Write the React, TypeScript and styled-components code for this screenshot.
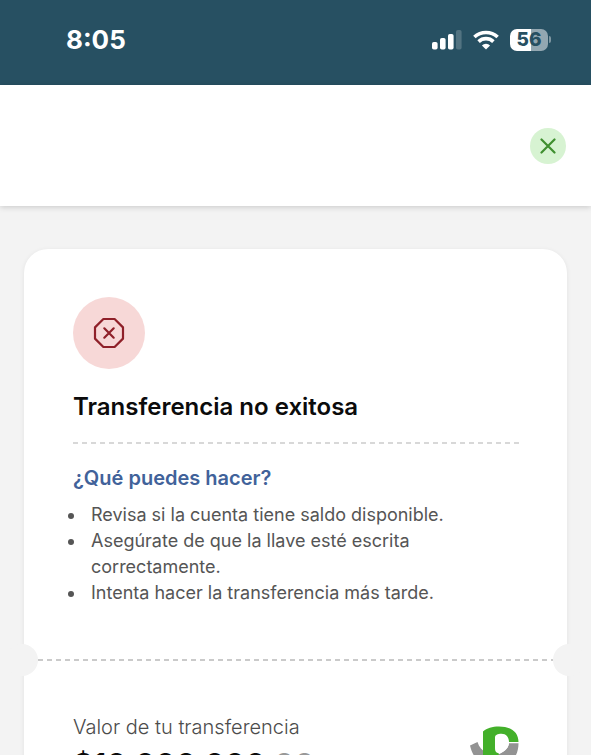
import React from 'react';
import styled, { createGlobalStyle } from 'styled-components';

const GlobalStyle = createGlobalStyle`
  *, *::before, *::after { box-sizing: border-box; }
  body {
    margin: 0;
    overflow: hidden;
    background: #f3f3f3;
    font-family: Inter, "Liberation Sans", sans-serif;
  }
`;

const Screen = styled.div`
  height: 100vh;
  overflow: hidden;
  display: flex;
  flex-direction: column;
`;

const StatusBar = styled.div`
  flex: none;
  display: flex;
  align-items: center;
  justify-content: space-between;
  height: 85px;
  padding: 0 40px 6px 66px;
  background: #275062;
  color: #fff;
`;

const Clock = styled.time`
  font-size: 26px;
  line-height: 32px;
  font-weight: 700;
`;

const StatusIcons = styled.div`
  display: flex;
  align-items: center;
  gap: 11px;
`;

const Battery = styled.div`
  display: flex;
  align-items: center;
  gap: 1px;
`;

const BatteryLevel = styled.span<{ $level: number }>`
  width: 38px;
  height: 22px;
  border-radius: 7px;
  background: linear-gradient(
    to right,
    #fff ${(p) => p.$level}%,
    #93a7b1 ${(p) => p.$level}%
  );
  color: #275062;
  font-size: 19px;
  line-height: 22px;
  font-weight: 800;
  text-align: center;
`;

const BatteryTip = styled.span`
  width: 2px;
  height: 7px;
  border-radius: 0 2px 2px 0;
  background: #7f97a2;
`;

const Header = styled.header`
  flex: none;
  display: flex;
  align-items: center;
  justify-content: flex-end;
  height: 121px;
  padding: 0 25px;
  background: #fff;
  box-shadow: 0 1px 6px rgba(0, 0, 0, 0.18);
`;

const CloseButton = styled.button`
  display: grid;
  place-items: center;
  width: 36px;
  height: 36px;
  padding: 0;
  border: 0;
  border-radius: 50%;
  background: #d7f3d2;
  cursor: pointer;
`;

const Main = styled.main`
  flex: none;
  padding: 43px 24px 24px;
`;

const Ticket = styled.article`
  border-radius: 24px;
  background: #fff;
  box-shadow: 0 1px 5px rgba(0, 0, 0, 0.07);
`;

const Section = styled.section<{ $top: number }>`
  padding: ${(p) => p.$top}px 48px 38px 49px;
`;

const ErrorBadge = styled.div`
  display: grid;
  place-items: center;
  width: 72px;
  height: 72px;
  border-radius: 50%;
  background: #f7d8d7;
`;

const Title = styled.h1`
  margin: 22px 0 19px;
  color: #0b0b0b;
  font-size: 24px;
  line-height: 32px;
  font-weight: 600;
`;

const DashedLine = styled.hr<{ $color: string }>`
  flex: 1;
  height: 2px;
  margin: 0;
  border: 0;
  background: repeating-linear-gradient(
    to right,
    ${(p) => p.$color} 0 5px,
    transparent 5px 9px
  );
`;

const Subtitle = styled.h2`
  margin: 22px 0 12px;
  color: #41629a;
  font-size: 20px;
  line-height: 24px;
  font-weight: 600;
`;

const Tips = styled.ul`
  margin: 0 0 0 -5px;
  padding: 0;
  list-style: none;
  color: #555;
  font-size: 18px;
  line-height: 26px;
`;

const Tip = styled.li`
  display: grid;
  grid-template-columns: 23px 1fr;

  &::before {
    content: '';
    width: 6px;
    height: 6px;
    margin-top: 11px;
    border-radius: 50%;
    background: currentColor;
  }
`;

const Perforation = styled.div`
  display: flex;
  align-items: center;
`;

const Notch = styled.span<{ $side: 'left' | 'right' }>`
  width: 32px;
  height: 32px;
  margin-${(p) => p.$side}: -18px;
  border-radius: 50%;
  background: #f3f3f3;
`;

const AmountRow = styled.div`
  display: flex;
  align-items: flex-start;
  justify-content: space-between;
`;

const AmountLabel = styled.p`
  margin: 0;
  color: #4c4c4c;
  font-size: 20px;
  line-height: 24px;
  font-weight: 300;
`;

const Amount = styled.p`
  margin: 8px 0 0;
  color: #0b0b0b;
  font-size: 31px;
  line-height: 36px;
  font-weight: 600;
`;

const Cents = styled.span`
  color: #999;
`;

const BrandLogo = styled.svg`
  flex: none;
  margin-top: 11px;
`;

const SignalIcon = () => (
  <svg width="30" height="20" viewBox="0 0 30 20" fill="#fff" aria-hidden="true">
    <rect x="0" y="12" width="5.6" height="7.5" rx="1.8" />
    <rect x="8" y="8" width="5.6" height="11.5" rx="1.8" />
    <rect x="16" y="4" width="5.6" height="15.5" rx="1.8" />
    <rect x="24" y="0" width="5.6" height="19.5" rx="1.8" opacity="0.2" />
  </svg>
);

const WifiIcon = () => (
  <svg width="26" height="20" viewBox="0 0 26 20" aria-hidden="true">
    <g fill="none" stroke="#fff" strokeWidth="3.6">
      <path d="M1.4 7a17 17 0 0 1 23.2 0" />
      <path d="M5.6 11.6a10.8 10.8 0 0 1 14.8 0" />
    </g>
    <path d="M13 19.6l-4.1-4.2a5.8 5.8 0 0 1 8.2 0z" fill="#fff" />
  </svg>
);

const CloseIcon = () => (
  <svg width="16" height="16" viewBox="0 0 16 16" aria-hidden="true">
    <path
      d="M1.5 1.5l13 13M14.5 1.5l-13 13"
      fill="none"
      stroke="#3f8f2f"
      strokeWidth="2.2"
      strokeLinecap="round"
    />
  </svg>
);

const ErrorIcon = () => (
  <svg
    width="32"
    height="32"
    viewBox="0 0 32 32"
    fill="none"
    stroke="#8f2029"
    strokeWidth="2.2"
    strokeLinecap="round"
    strokeLinejoin="round"
    aria-hidden="true"
  >
    <path d="M10.4 2h11.2l8.4 8.4v11.2L21.6 30H10.4L2 21.6V10.4z" />
    <path d="M11.3 11.3l9.4 9.4M20.7 11.3l-9.4 9.4" />
  </svg>
);

const tips = [
  'Revisa si la cuenta tiene saldo disponible.',
  'Asegúrate de que la llave esté escrita correctamente.',
  'Intenta hacer la transferencia más tarde.',
];

export default function App() {
  return (
    <>
      <GlobalStyle />
      <Screen>
        <StatusBar>
          <Clock>8:05</Clock>
          <StatusIcons>
            <SignalIcon />
            <WifiIcon />
            <Battery>
              <BatteryLevel $level={56}>56</BatteryLevel>
              <BatteryTip />
            </Battery>
          </StatusIcons>
        </StatusBar>
        <Header>
          <CloseButton type="button" aria-label="Cerrar">
            <CloseIcon />
          </CloseButton>
        </Header>
        <Main>
          <Ticket>
            <Section $top={48}>
              <ErrorBadge>
                <ErrorIcon />
              </ErrorBadge>
              <Title>Transferencia no exitosa</Title>
              <DashedLine $color="#d8d8d8" />
              <Subtitle>¿Qué puedes hacer?</Subtitle>
              <Tips>
                {tips.map((tip) => (
                  <Tip key={tip}>{tip}</Tip>
                ))}
              </Tips>
            </Section>
            <Perforation>
              <Notch $side="left" />
              <DashedLine $color="#cacaca" />
              <Notch $side="right" />
            </Perforation>
            <Section $top={39}>
              <AmountRow>
                <div>
                  <AmountLabel>Valor de tu transferencia</AmountLabel>
                  <Amount>
                    $10.000.000<Cents>,00</Cents>
                  </Amount>
                </div>
                <BrandLogo width="49" height="46" viewBox="0 0 49 46" aria-hidden="true">
                  <path
                    d="M0 19.5L7.5 16c1.5 5 4.500 8.500 9.500 11l11 1c5-1.500 10.500-5 11-10.800h9.500C48.500 32 39 41 25 41 12 41 3 33 0 19.500z"
                    fill="#939393"
                  />
                  <path d="M24 7h9l6 8.500c0 6-4 10-10 12.500l-5-3z" fill="#fff" />
                  <path
                    d="M13 5.500C17 2 22 .5 29 .5c12.500 0 19.500 6 19.500 15.500H39c0-5-3-8.300-7.500-8.300-4 0-6.500 1-6.500 4v10.300c0 4 1.500 4.500 4 5.500L27 33H13z"
                    fill="#43b02a"
                  />
                </BrandLogo>
              </AmountRow>
            </Section>
          </Ticket>
        </Main>
      </Screen>
    </>
  );
}
